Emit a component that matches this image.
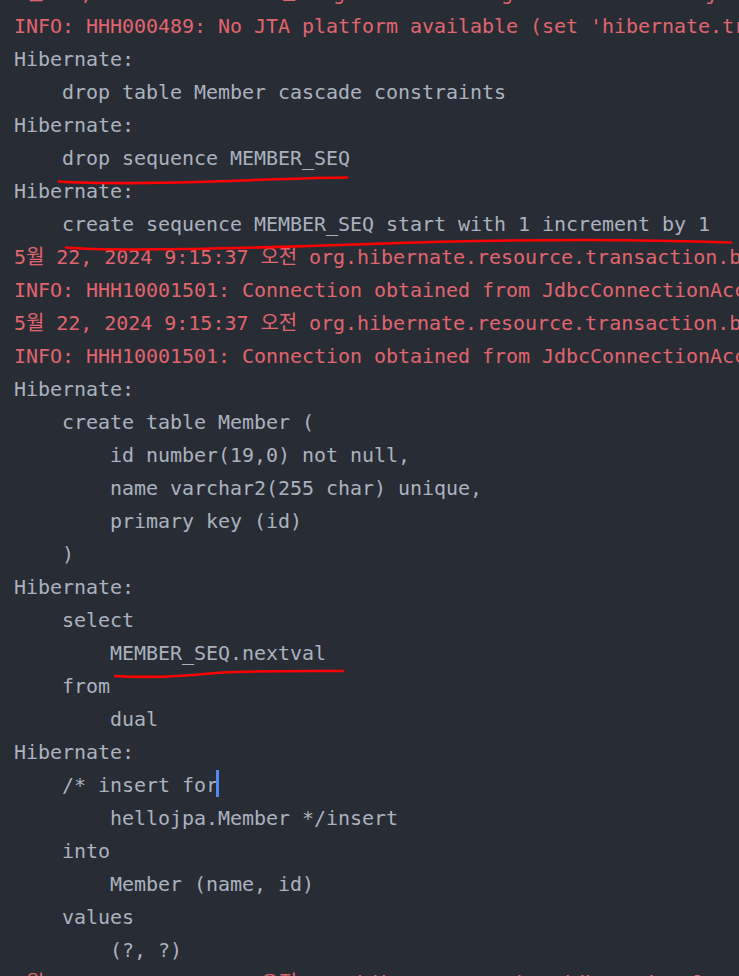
import React from "react";

type Line = { text: string; tone: "log" | "sql"; caret?: boolean };

const LOG_DATE = "5월 22, 2024 9:15:37 오전 ";

const lines: Line[] = [
  { text: LOG_DATE + "org.hibernate.engine.transaction.jta.platform.internal.JtaPlatformInitiator initiateService", tone: "log" },
  { text: "INFO: HHH000489: No JTA platform available (set 'hibernate.transaction.jta.platform' to enable JTA platform integration)", tone: "log" },
  { text: "Hibernate:", tone: "sql" },
  { text: "    drop table Member cascade constraints", tone: "sql" },
  { text: "Hibernate:", tone: "sql" },
  { text: "    drop sequence MEMBER_SEQ", tone: "sql" },
  { text: "Hibernate:", tone: "sql" },
  { text: "    create sequence MEMBER_SEQ start with 1 increment by 1", tone: "sql" },
  { text: LOG_DATE + "org.hibernate.resource.transaction.backend.jdbc.internal.JdbcIsolationDelegate delegateWork", tone: "log" },
  { text: "INFO: HHH10001501: Connection obtained from JdbcConnectionAccess [org.hibernate.engine.jdbc.env.internal.JdbcEnvironmentInitiator] for (non-JTA) DDL execution was not in auto-commit mode", tone: "log" },
  { text: LOG_DATE + "org.hibernate.resource.transaction.backend.jdbc.internal.JdbcIsolationDelegate delegateWork", tone: "log" },
  { text: "INFO: HHH10001501: Connection obtained from JdbcConnectionAccess [org.hibernate.engine.jdbc.env.internal.JdbcEnvironmentInitiator] for (non-JTA) DDL execution was not in auto-commit mode", tone: "log" },
  { text: "Hibernate:", tone: "sql" },
  { text: "    create table Member (", tone: "sql" },
  { text: "        id number(19,0) not null,", tone: "sql" },
  { text: "        name varchar2(255 char) unique,", tone: "sql" },
  { text: "        primary key (id)", tone: "sql" },
  { text: "    )", tone: "sql" },
  { text: "Hibernate:", tone: "sql" },
  { text: "    select", tone: "sql" },
  { text: "        MEMBER_SEQ.nextval", tone: "sql" },
  { text: "    from", tone: "sql" },
  { text: "        dual", tone: "sql" },
  { text: "Hibernate:", tone: "sql" },
  { text: "    /* insert for", tone: "sql", caret: true },
  { text: "        hellojpa.Member */insert", tone: "sql" },
  { text: "    into", tone: "sql" },
  { text: "        Member (name, id)", tone: "sql" },
  { text: "    values", tone: "sql" },
  { text: "        (?, ?)", tone: "sql" },
  { text: LOG_DATE + "org.hibernate.engine.jdbc.spi.SqlExceptionHelper logExceptions", tone: "log" },
];

const App = () => {
  return (
    <div className="relative w-[739px] h-[976px] overflow-hidden bg-[#282c34]">
      <div
        className="-mt-[23px] pl-[14px] text-[20px] leading-[33px] tracking-[-0.04px] whitespace-pre"
        style={{ fontFamily: '"DejaVu Sans Mono", "Noto Sans CJK KR", monospace' }}
      >
        {lines.map((line, i) => (
          <div
            key={i}
            className={
              line.tone === "log"
                ? "h-[33px] text-[#e0656e]"
                : "h-[33px] text-[#abb2bf]"
            }
          >
            {line.text}
            {line.caret && (
              <span className="inline-block w-[3px] h-[27px] -ml-[2px] bg-[#4e8cf2] align-[-5px]" />
            )}
          </div>
        ))}
      </div>

      {/* hand-drawn underlines */}
      <svg
        className="absolute inset-0 pointer-events-none"
        width="739"
        height="976"
        viewBox="0 0 739 976"
        fill="none"
      >
        <path
          d="M59 181.5 C 90 183.5, 160 184, 230 181 S 320 178, 347 177.5"
          stroke="#ff0000"
          strokeWidth="2.6"
          strokeLinecap="round"
        />
        <path
          d="M66 247.5 C 100 250.5, 200 250, 370 244 S 650 239.5, 731 242.5"
          stroke="#ff0000"
          strokeWidth="2.6"
          strokeLinecap="round"
        />
        <path
          d="M115 676 C 140 677.5, 180 676.5, 210 673.5 S 300 671, 343 671"
          stroke="#ff0000"
          strokeWidth="2.6"
          strokeLinecap="round"
        />
      </svg>
    </div>
  );
};

export default App;
